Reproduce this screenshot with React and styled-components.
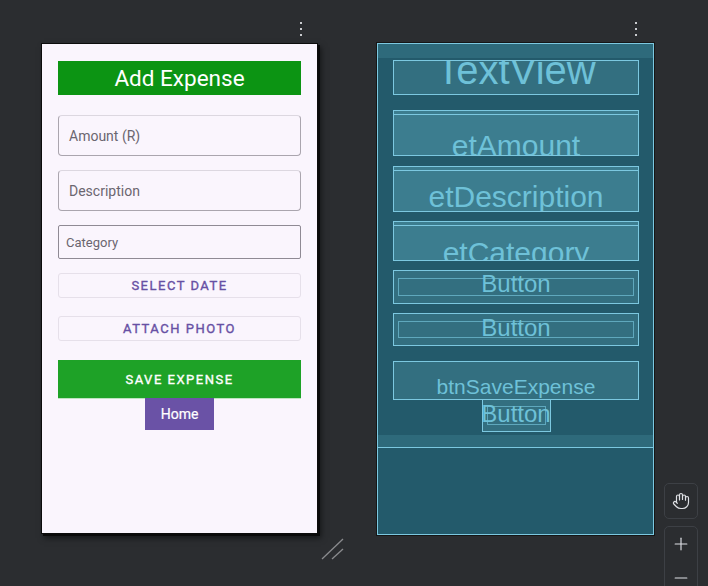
import React from "react";
import styled, { createGlobalStyle } from "styled-components";
import { Hand, Plus, Minus } from "lucide-react";

const GlobalStyle = createGlobalStyle`
  html, body {
    margin: 0;
    padding: 0;
    background: #2b2d30;
  }
  * {
    box-sizing: border-box;
  }
`;

const Canvas = styled.div`
  position: relative;
  width: 708px;
  height: 586px;
  overflow: hidden;
  background: #2b2d30;
  display: flex;
  align-items: flex-start;
  padding-left: 41px;
  gap: 58px;
  font-family: Roboto, "Liberation Sans", sans-serif;
`;

const Column = styled.div`
  display: flex;
  flex-direction: column;
  width: ${(p) => p.$width}px;
`;

const TopBar = styled.div`
  height: 43px;
  display: flex;
  flex-direction: column;
  align-items: flex-end;
  gap: 4px;
  padding-top: 22px;
  padding-right: ${(p) => p.$right}px;
`;

const Dot = styled.span`
  width: 2px;
  height: 2px;
  background: #c9cbcf;
`;

/* ---------- design view ---------- */

const Device = styled.div`
  height: 491px;
  background: #faf5fd;
  border: 1px solid #0c0c0c;
  box-shadow: 2px 2px 0 #0a0a0a, 3px 4px 6px rgba(0, 0, 0, 0.55);
  display: flex;
  flex-direction: column;
  padding: 0 16px;
`;

const Header = styled.div`
  margin-top: 17px;
  height: 34px;
  background: #0c9413;
  color: #fff;
  font-size: 22.5px;
  display: flex;
  align-items: center;
  justify-content: center;
`;

const Field = styled.div`
  margin-top: ${(p) => p.$gap}px;
  height: ${(p) => p.$h}px;
  border: 1px solid ${(p) => (p.$dark ? "#8f8a94" : "#aaa5ae")};
  border-top-color: ${(p) => (p.$dark ? "#8f8a94" : "#dcd7e0")};
  border-radius: ${(p) => (p.$dark ? 2 : 4)}px;
  display: flex;
  align-items: center;
  padding-left: ${(p) => (p.$dark ? 7 : 10)}px;
  color: #6b6670;
  font-size: ${(p) => (p.$dark ? 13 : 14)}px;
`;

const TextButton = styled.div`
  margin-top: ${(p) => p.$gap}px;
  height: 25px;
  border: 1px solid #e6e0ea;
  border-radius: 3px;
  display: flex;
  align-items: center;
  justify-content: center;
  color: #6750a4;
  font-size: 13px;
  font-weight: 400;
  -webkit-text-stroke: 0.35px currentColor;
  letter-spacing: 1.5px;
`;

const SaveButton = styled.div`
  margin-top: 19px;
  height: 38px;
  background: #1ea227;
  box-shadow: 0 1px 0 #bfe3c1;
  display: flex;
  align-items: center;
  justify-content: center;
  color: #fff;
  font-size: 13px;
  font-weight: 400;
  -webkit-text-stroke: 0.35px currentColor;
  letter-spacing: 1.5px;
`;

const HomeButton = styled.div`
  align-self: center;
  width: 69px;
  height: 32px;
  background: #6a52a6;
  color: #fff;
  font-size: 14px;
  -webkit-text-stroke: 0.2px currentColor;
  display: flex;
  align-items: center;
  justify-content: center;
`;

/* ---------- blueprint view ---------- */

const Blueprint = styled.div`
  margin-left: 1px;
  width: 277px;
  height: 492px;
  background: #235a6b;
  border: 1px solid #7cc8e0;
  outline: 1px solid #161616;
  display: flex;
  flex-direction: column;
  font-family: "Liberation Sans", Arial, sans-serif;
  color: #6ec1d8;
`;

const Band = styled.div`
  height: ${(p) => p.$h}px;
  flex: none;
  background: #2e6a7b;
  border-bottom: ${(p) => (p.$line ? "1px solid #7cc8e0" : "none")};
`;

const BlueContent = styled.div`
  height: 377px;
  flex: none;
  display: flex;
  flex-direction: column;
  padding: 0 14px 0 15px;
`;

const BlueBox = styled.div`
  position: relative;
  margin-top: ${(p) => p.$gap}px;
  height: ${(p) => p.$h}px;
  width: ${(p) => (p.$w ? `${p.$w}px` : "auto")};
  align-self: ${(p) => (p.$w ? "center" : "stretch")};
  flex: none;
  border: 1px solid #7cc8e0;
  background: ${(p) => (p.$edit ? "#3c7d8f" : "#336f80")};
  overflow: hidden;
  display: flex;
  justify-content: center;
  align-items: flex-start;

  &::before {
    content: "";
    display: ${(p) => (p.$edit ? "block" : "none")};
    position: absolute;
    left: 0;
    right: 0;
    top: 3px;
    height: 1px;
    background: #7cc8e0;
  }
`;

const InnerRect = styled.div`
  position: absolute;
  left: ${(p) => p.$x}px;
  right: ${(p) => p.$x}px;
  top: ${(p) => p.$y}px;
  bottom: ${(p) => p.$y}px;
  border: 1px solid #5fa8bd;
`;

const BlueLabel = styled.span`
  position: relative;
  margin-top: ${(p) => p.$top}px;
  font-size: ${(p) => p.$size}px;
  line-height: 1;
  white-space: nowrap;
`;

const BottomArea = styled.div`
  flex: 1;
`;

/* ---------- overlays ---------- */

const ResizeHandle = styled.svg`
  position: absolute;
  left: 320px;
  top: 537px;
`;

const ToolStack = styled.div`
  position: absolute;
  left: 664px;
  top: 483px;
  display: flex;
  flex-direction: column;
  gap: 7px;
`;

const ToolGroup = styled.div`
  width: 34px;
  height: ${(p) => p.$h}px;
  border: 1px solid #3d4045;
  border-radius: 5px;
  display: flex;
  flex-direction: column;
  align-items: center;
  justify-content: ${(p) => (p.$single ? "center" : "flex-start")};
  padding-top: ${(p) => (p.$single ? 0 : 7)}px;
  gap: 14px;
  color: #dfe1e5;
`;

const blueBoxes = [
  { label: "TextView", gap: 2, h: 35, size: 40, top: -11 },
  { label: "etAmount", gap: 15, h: 46, size: 30, top: 20, edit: true },
  { label: "etDescription", gap: 10, h: 46, size: 30, top: 15, edit: true },
  { label: "etCategory", gap: 9, h: 40, size: 30, top: 16, edit: true },
  { label: "Button", gap: 9, h: 34, size: 24, top: 1, inner: [4, 7] },
  { label: "Button", gap: 9, h: 33, size: 24, top: 2, inner: [4, 7] },
  { label: "btnSaveExpense", gap: 15, h: 39, size: 21, top: 14 },
  { label: "Button", gap: -1, h: 33, w: 69, size: 24, top: 2, inner: [4, 6] },
];

function Dots({ right }) {
  return (
    <TopBar $right={right}>
      <Dot />
      <Dot />
      <Dot />
    </TopBar>
  );
}

export default function App() {
  return (
    <Canvas>
      <GlobalStyle />
      <Column $width={277}>
        <Dots right={16} />
        <Device>
          <Header>Add Expense</Header>
          <Field $gap={20} $h={41}>Amount (R)</Field>
          <Field $gap={14} $h={41}>Description</Field>
          <Field $gap={14} $h={34} $dark>Category</Field>
          <TextButton $gap={14}>SELECT DATE</TextButton>
          <TextButton $gap={18}>ATTACH PHOTO</TextButton>
          <SaveButton>SAVE EXPENSE</SaveButton>
          <HomeButton>Home</HomeButton>
        </Device>
      </Column>

      <Column $width={278}>
        <Dots right={17} />
        <Blueprint>
          <Band $h={14} />
          <BlueContent>
            {blueBoxes.map((b, i) => (
              <BlueBox key={i} $gap={b.gap} $h={b.h} $w={b.w} $edit={b.edit}>
                {b.inner && <InnerRect $x={b.inner[0]} $y={b.inner[1]} />}
                <BlueLabel $size={b.size} $top={b.top}>
                  {b.label}
                </BlueLabel>
              </BlueBox>
            ))}
          </BlueContent>
          <Band $h={13} $line />
          <BottomArea />
        </Blueprint>
      </Column>

      <ResizeHandle width="26" height="26" viewBox="0 0 26 26">
        <line x1="23" y1="2" x2="2" y2="22" stroke="#8a8b8e" strokeWidth="1.3" />
        <line x1="23" y1="12" x2="12" y2="22" stroke="#8a8b8e" strokeWidth="1.3" />
      </ResizeHandle>

      <ToolStack>
        <ToolGroup $h={36} $single>
          <Hand size={18} strokeWidth={1.6} />
        </ToolGroup>
        <ToolGroup $h={70}>
          <Plus size={20} strokeWidth={1.4} />
          <Minus size={20} strokeWidth={1.4} />
        </ToolGroup>
      </ToolStack>
    </Canvas>
  );
}
